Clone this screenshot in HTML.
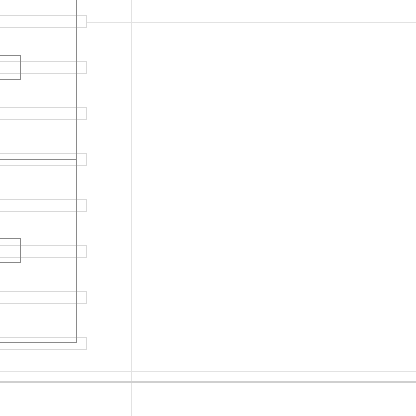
<!DOCTYPE html><html><head><style>
body{margin:0;width:416px;height:416px;background:#fff;position:relative;overflow:hidden}
div{position:absolute;box-sizing:border-box}
.bar{left:-1px;width:88px;height:13px;border:1px solid #d8d8d8}
.dk{background:#8a8a8a}
.box{left:-1px;width:22px;height:25px;border:1px solid #888}
</style></head><body>
<div style="left:131px;top:0;width:1px;height:416px;background:#e2e2e2"></div>
<div style="left:86px;top:22px;width:330px;height:1px;background:#e2e2e2"></div>
<div style="left:0;top:371px;width:416px;height:1px;background:#e2e2e2"></div>
<div style="left:0;top:381px;width:416px;height:2px;background:#cfcfcf"></div>
<div class="bar" style="top:15px"></div>
<div class="bar" style="top:61px"></div>
<div class="bar" style="top:107px"></div>
<div class="bar" style="top:153px"></div>
<div class="bar" style="top:199px"></div>
<div class="bar" style="top:245px"></div>
<div class="bar" style="top:291px"></div>
<div class="bar" style="top:337px"></div>
<div class="dk" style="left:76px;top:0;width:1px;height:343px"></div>
<div class="dk" style="left:0;top:342px;width:77px;height:1px"></div>
<div class="dk" style="left:0;top:159px;width:76px;height:1px"></div>
<div class="box" style="top:55px"></div>
<div class="box" style="top:238px"></div>
</body></html>
